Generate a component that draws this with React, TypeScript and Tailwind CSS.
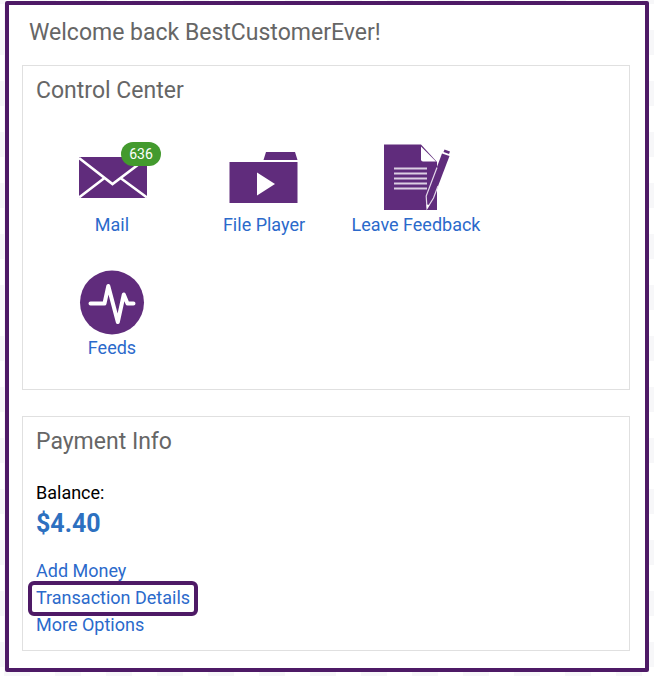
import * as React from 'react';

interface ControlItem {
	label: string;
	icon: React.ReactNode;
	count?: number;
}

interface PaymentLink {
	label: string;
	highlighted?: boolean;
}

function MailIcon() {
	return (
		<svg className="w-[72px] h-[70px]" viewBox="0 0 72 70" fill="none" aria-hidden="true">
			<path d="M3 14H71V55H3Z" fill="#602c7c" />
			<path d="M3 15L36.5 41L71 15M3 54.5L28.5 35M71 54.5L44.5 35" stroke="#fff" strokeWidth="2.6" />
		</svg>
	);
}

function FolderIcon() {
	return (
		<svg className="w-[72px] h-[70px]" viewBox="0 0 72 70" aria-hidden="true">
			<path d="M35.5 17L38 9H67L69.5 17Z" fill="#602c7c" />
			<path d="M1.5 19H69.5V60H1.5Z" fill="#602c7c" />
			<path d="M29 29.5V52.5L47 41Z" fill="#fff" />
		</svg>
	);
}

function FeedbackIcon() {
	return (
		<svg className="w-[72px] h-[70px]" viewBox="0 0 72 70" aria-hidden="true">
			<path d="M4 1.5H41L57 19V67H4Z" fill="#602c7c" />
			<path d="M41 3.5L56 18.5H43Q41 18.5 41 16.5Z" fill="#fff" />
			<path d="M14 25.5H47M14 30.5H47M14 35.5H47M14 40.5H47M14 45.5H47" stroke="#dccfe3" strokeWidth="2" />
			<path d="M62 10.5L69.5 13L53.5 55L47 65.5L46 53Z" fill="#602c7c" />
			<path d="M57 24.5L46.2 53L47 65.5L53.5 55L58 43" fill="none" stroke="#e4d9ea" strokeWidth="1.2" />
			<path d="M46.5 61.5L49.5 62L47 66Z" fill="#fff" />
			<path d="M64.5 6.5L70 8.5L69 11L63.5 9Z" fill="#602c7c" />
		</svg>
	);
}

function FeedsIcon() {
	return (
		<svg className="w-[72px] h-[70px]" viewBox="0 0 72 70" fill="none" aria-hidden="true">
			<circle cx="36" cy="36.5" r="32" fill="#602c7c" />
			<path
				d="M14.5 37.5H28.5L32.3 20L41.8 56L47.8 28.5L51.5 37.5H57.5"
				stroke="#fff"
				strokeWidth="4"
				strokeLinecap="round"
				strokeLinejoin="round"
			/>
		</svg>
	);
}

const controlItems: readonly ControlItem[] = [
	{ label: 'Mail', icon: <MailIcon />, count: 636 },
	{ label: 'File Player', icon: <FolderIcon /> },
	{ label: 'Leave Feedback', icon: <FeedbackIcon /> },
	{ label: 'Feeds', icon: <FeedsIcon /> },
];

const paymentLinks: readonly PaymentLink[] = [
	{ label: 'Add Money' },
	{ label: 'Transaction Details', highlighted: true },
	{ label: 'More Options' },
];

interface PanelProps {
	title: string;
	children: React.ReactNode;
}

function Panel({ title, children }: PanelProps) {
	return (
		<section className="border border-[#e0e0e0] px-[13px]">
			<h2 className="text-[23px] leading-[50px] text-[#666]">{title}</h2>
			{children}
		</section>
	);
}

export default function App() {
	return (
		<div className="min-h-screen pt-px pb-1 px-[5px] font-[Roboto,sans-serif] bg-[repeating-conic-gradient(#f7f7f9_0_25%,#fff_0_50%)] bg-[length:51px_51px] bg-[position:-21px_4px]">
			<main className="border-4 border-[#4e1a66] rounded-xs bg-white pl-[13px] pr-[15px] pb-[17px]">
				<h1 className="pl-[7px] mb-1 text-[23px] leading-[56px] text-[#666]">Welcome back BestCustomerEver!</h1>
				<div className="flex flex-col gap-[26px]">
					<Panel title="Control Center">
						<ul className="flex flex-wrap gap-y-[29px] pt-[27px] pb-[29px]">
							{controlItems.map((item) => (
								<li key={item.label} className="w-[152px] flex justify-center">
									<a href="#" className="flex flex-col items-center text-lg leading-6 text-[#2b6acb]">
										<span className="relative">
											{item.icon}
											{item.count && (
												<span className="absolute -top-px left-[45px] w-10 rounded-full bg-[#439a2e] text-center text-sm leading-6 text-white">
													{item.count}
												</span>
											)}
										</span>
										{item.label}
									</a>
								</li>
							))}
						</ul>
					</Panel>
					<Panel title="Payment Info">
						<div className="pt-3 pb-4">
							<p className="text-lg leading-7 text-black">Balance:</p>
							<p className="text-[25px] leading-[34px] font-bold text-[#2d70c0]">$4.40</p>
						</div>
						<ul className="pb-3 text-lg leading-[27px]">
							{paymentLinks.map((link) => (
								<li key={link.label} className="flex">
									<a href="#" className="relative text-[#2b6acb]">
										{link.label}
										{link.highlighted && (
											<span className="absolute z-10 -inset-x-2 -top-[3px] -bottom-[5px] border-4 border-[#4e1a66] rounded-md" />
										)}
									</a>
								</li>
							))}
						</ul>
					</Panel>
				</div>
			</main>
		</div>
	);
}
